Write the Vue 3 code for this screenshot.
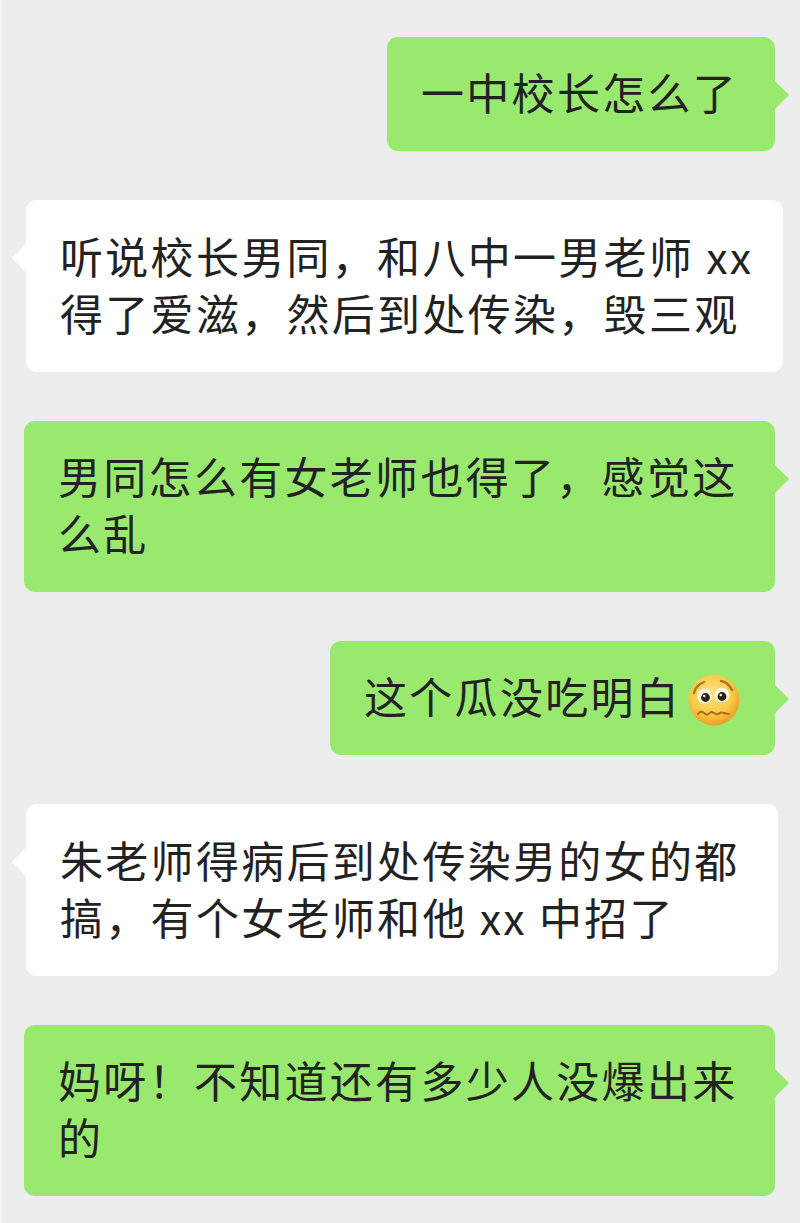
<template>
  <div class="chat">
    <div
      v-for="(m, i) in messages"
      :key="i"
      class="row"
      :class="m.me ? 'me' : 'them'"
    >
      <div class="bubble" :class="{ tall: m.text.includes('\n') }" :style="{ width: m.width + 'px' }">
        <span class="text">{{ m.text }}</span>
        <svg v-if="m.emoji" class="emoji" viewBox="0 0 54 54">
          <defs>
            <radialGradient id="face" cx="45%" cy="38%" r="62%">
              <stop offset="0%" stop-color="#fde08a" />
              <stop offset="65%" stop-color="#f9cb45" />
              <stop offset="100%" stop-color="#ec9f27" />
            </radialGradient>
          </defs>
          <circle cx="27" cy="27" r="25.5" fill="url(#face)" />
          <circle cx="17.5" cy="23" r="7.5" fill="#fff6dc" />
          <circle cx="35" cy="22" r="7.5" fill="#fff6dc" />
          <circle cx="18.5" cy="24.5" r="4.4" fill="#2d2218" />
          <circle cx="35" cy="23.5" r="4.4" fill="#2d2218" />
          <circle cx="17.3" cy="23" r="1.2" fill="#fff" />
          <circle cx="33.8" cy="22" r="1.2" fill="#fff" />
          <path d="M7 20q2-8 10-11M34 8q7 1 11 9" fill="none" stroke="#a9762c" stroke-width="2.4" stroke-linecap="round" />
          <path d="M11 41q3-4 6-1t5 .5 5-.5 5 .5 5-.5 5 1" fill="none" stroke="#b5651d" stroke-width="2" stroke-linecap="round" />
        </svg>
      </div>
    </div>
  </div>
</template>

<script setup>
const messages = [
  { me: true, width: 388, text: '一中校长怎么了' },
  { me: false, width: 757, text: '听说校长男同，和八中一男老师 xx\n得了爱滋，然后到处传染，毁三观' },
  { me: true, width: 751, text: '男同怎么有女老师也得了，感觉这\n么乱' },
  { me: true, width: 445, text: '这个瓜没吃明白', emoji: true },
  { me: false, width: 752, text: '朱老师得病后到处传染男的女的都\n搞，有个女老师和他 xx 中招了' },
  { me: true, width: 751, text: '妈呀！不知道还有多少人没爆出来\n的' },
]
</script>

<style>
html, body {
  background: #ededed;
}
</style>

<style scoped>
.chat {
  width: 800px;
  height: 1223px;
  box-sizing: border-box;
  padding: 37px 25px 0 24px;
  border-left: 2px solid #f5f5f5;
  display: flex;
  flex-direction: column;
  gap: 49px;
  background: #ededed;
  font-family: "Noto Sans CJK SC", "Liberation Sans", sans-serif;
  color: #222;
}

.row {
  display: flex;
}

.me {
  justify-content: flex-end;
}

.bubble {
  position: relative;
  flex: none;
  box-sizing: border-box;
  min-height: 114px;
  padding: 26px 0 31px 34px;
  border-radius: 11px;
  font-size: 43px;
  line-height: 57px;
  letter-spacing: 2.3px;
  display: flex;
  align-items: center;
}

.them .bubble.tall {
  min-height: 172px;
}

.text {
  white-space: pre-line;
}

.me .bubble {
  background: #98e96e;
}

.them .bubble {
  background: #ffffff;
}

.bubble::after {
  content: "";
  position: absolute;
  top: 44px;
  width: 0;
  height: 0;
  border-top: 14px solid transparent;
  border-bottom: 14px solid transparent;
}

.me .bubble::after {
  right: -14px;
  border-left: 14px solid #98e96e;
}

.them .bubble::after {
  left: -14px;
  border-right: 14px solid #ffffff;
}

.emoji {
  width: 54px;
  height: 54px;
  flex: none;
  margin-left: 6px;
  margin-top: 4px;
  margin-bottom: -4px;
}
</style>
